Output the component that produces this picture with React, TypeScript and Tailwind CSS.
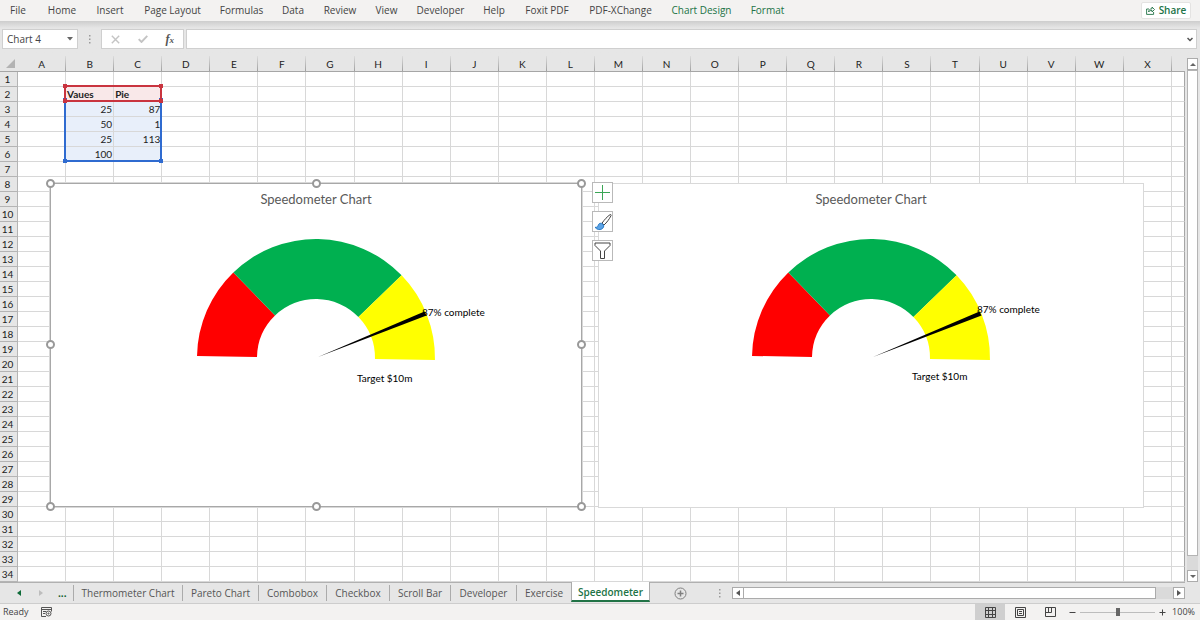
import { useState } from 'react'
import clsx from 'clsx'

interface RibbonTab {
  label: string
  width: string
  contextual?: boolean
}

interface SheetTab {
  label: string
  width: string
}

const ribbonTabs: RibbonTab[] = [
  { label: 'File', width: 'w-[34px]' },
  { label: 'Home', width: 'w-[54px]' },
  { label: 'Insert', width: 'w-[42px]' },
  { label: 'Page Layout', width: 'w-[83px]' },
  { label: 'Formulas', width: 'w-[55px]' },
  { label: 'Data', width: 'w-[48px]' },
  { label: 'Review', width: 'w-[46px]' },
  { label: 'View', width: 'w-[47px]' },
  { label: 'Developer', width: 'w-[61px]' },
  { label: 'Help', width: 'w-[46px]' },
  { label: 'Foxit PDF', width: 'w-[60px]' },
  { label: 'PDF-XChange', width: 'w-[87px]' },
  { label: 'Chart Design', width: 'w-[75px]', contextual: true },
  { label: 'Format', width: 'w-[57px]', contextual: true },
]

const sheetTabs: SheetTab[] = [
  { label: 'Thermometer Chart', width: 'w-[109px]' },
  { label: 'Pareto Chart', width: 'w-[76px]' },
  { label: 'Combobox', width: 'w-[68px]' },
  { label: 'Checkbox', width: 'w-[63px]' },
  { label: 'Scroll Bar', width: 'w-[61px]' },
  { label: 'Developer', width: 'w-[66px]' },
  { label: 'Exercise', width: 'w-[54px]' },
]

const columns = 'ABCDEFGHIJKLMNOPQRSTUVWX'.split('')
const rows = Array.from({ length: 34 }, (_, i) => i + 1)

const cells: Record<string, string> = {
  B2: 'Vaues',
  C2: 'Pie',
  B3: '25',
  C3: '87',
  B4: '50',
  C4: '1',
  B5: '25',
  C5: '113',
  B6: '100',
}

// Gauge geometry, angles in degrees counter-clockwise from the x axis
const CENTER = 120
const OUTER = 119
const INNER = 59

const segments = [
  { from: 179, to: 134, color: '#ff0000' },
  { from: 134, to: 44, color: '#00b050' },
  { from: 44, to: -1, color: '#ffff00' },
]

function polar(r: number, deg: number) {
  const a = (deg * Math.PI) / 180
  return `${(CENTER + r * Math.cos(a)).toFixed(2)} ${(CENTER - r * Math.sin(a)).toFixed(2)}`
}

function segmentPath(from: number, to: number) {
  return `M ${polar(OUTER, from)} A ${OUTER} ${OUTER} 0 0 1 ${polar(OUTER, to)} L ${polar(INNER, to)} A ${INNER} ${INNER} 0 0 0 ${polar(INNER, from)} Z`
}

function SpeedometerChart({ valueY, targetY }: { valueY: number; targetY: number }) {
  return (
    <div className="flex flex-col items-center pt-[6px] font-[Lato,sans-serif]">
      <h2 className="text-[13px] leading-[18px] text-[#595959]">Speedometer Chart</h2>
      <svg width="240" height="160" className="mt-[30px] overflow-visible">
        {segments.map((s) => (
          <path key={s.color} d={segmentPath(s.from, s.to)} fill={s.color} />
        ))}
        <path d="M 122 119 L 228.5 73.5 L 230.5 77.5 Z" fill="#000" />
        <text x="226" y={valueY} fontSize="10" fill="#000">87% complete</text>
        <text x="161" y={targetY} fontSize="10" fill="#000">Target $10m</text>
      </svg>
    </div>
  )
}

const handles = [
  '-left-[5px] -top-[5px]',
  'left-1/2 -ml-1 -top-[5px]',
  '-right-[5px] -top-[5px]',
  '-left-[5px] top-1/2 -mt-[5px]',
  '-right-[5px] top-1/2 -mt-[5px]',
  '-left-[5px] -bottom-[5px]',
  'left-1/2 -ml-1 -bottom-[5px]',
  '-right-[5px] -bottom-[5px]',
]

function RangeOutline({ className, dot }: { className: string; dot: string }) {
  return (
    <div className={clsx('pointer-events-none absolute border-2', className)}>
      {['-left-[3px] -top-[3px]', '-right-[3px] -top-[3px]', '-left-[3px] -bottom-[3px]', '-right-[3px] -bottom-[3px]'].map((p) => (
        <span key={p} className={clsx('absolute size-1', p, dot)} />
      ))}
    </div>
  )
}

function Ribbon() {
  return (
    <header className="flex h-[21px] items-center bg-[#f3f2f1] pb-px">
      <nav className="flex pl-px">
        {ribbonTabs.map((tab) => (
          <button
            key={tab.label}
            className={clsx('flex justify-center text-[10px] leading-[18px] whitespace-nowrap', tab.width, tab.contextual ? 'text-[#217346]' : 'text-[#444444]')}
          >
            {tab.label}
          </button>
        ))}
      </nav>
      <button className="mr-[9px] ml-auto flex h-[17px] w-[50px] items-center justify-center gap-1 rounded-[2px] border border-[#e4e3e2] bg-white text-[10px] font-semibold text-[#217346]">
        <svg width="9" height="9" viewBox="0 0 9 9" fill="none" stroke="currentColor" strokeWidth="0.9">
          <path d="M3 3H.6v5.4h7V6" />
          <path d="M2.5 6C2.8 3.8 4 2.8 6 2.8V1l2.500 2.500L6 6V4.400C4.500 4.400 3.300 4.900 2.500 6z" />
        </svg>
        Share
      </button>
    </header>
  )
}

function FormulaBar() {
  return (
    <div className="flex h-[35px] items-start bg-linear-to-b from-[#cdcdcd] via-[#e6e6e6] via-20% to-[#e6e6e6] pt-2 pr-[3px] pl-[2px]">
      <div className="flex h-5 w-[76px] items-center border border-[#cfcfcf] bg-white">
        <input aria-label="Name Box" defaultValue="Chart 4" className="w-[60px] bg-transparent pl-1 text-[10px] text-[#444] outline-none" />
        <button aria-label="Open name list" className="flex flex-1 justify-center">
          <svg width="6" height="4" viewBox="0 0 6 4"><path d="M0 0h6L3 3.500z" fill="#666" /></svg>
        </button>
      </div>
      <div className="flex h-5 w-[23px] items-center justify-center">
        <svg width="2" height="9" fill="#9a9a9a"><path d="M0 0h1.500v1.500H0zM0 3.500h1.500v1.500H0zM0 7h1.500v1.500H0z" /></svg>
      </div>
      <div className="flex h-5 w-[83px] items-center justify-around border border-[#cfcfcf] bg-white">
        <button aria-label="Cancel">
          <svg width="9" height="9" viewBox="0 0 9 9" stroke="#c4c4c4" strokeWidth="1.400"><path d="M.8.8l7.400 7.400M8.200.8L.8 8.200" /></svg>
        </button>
        <button aria-label="Enter">
          <svg width="10" height="8" viewBox="0 0 10 8" fill="none" stroke="#c4c4c4" strokeWidth="1.900"><path d="M.7 4.200L3.500 7 9.300.8" /></svg>
        </button>
        <button aria-label="Insert Function" className="flex items-baseline font-['Liberation_Serif',serif] font-bold text-[#555] italic">
          <span className="text-[12px] leading-4">f</span>
          <span className="text-[9px] leading-4">x</span>
        </button>
      </div>
      <div className="ml-[2px] flex h-5 flex-1 items-center border border-[#cfcfcf] bg-white">
        <input aria-label="Formula Bar" className="h-full flex-1 bg-transparent px-1 text-[10px] outline-none" />
        <button aria-label="Expand Formula Bar" className="mr-[3px]">
          <svg width="6" height="5" viewBox="0 0 6 5" fill="none" stroke="#555" strokeWidth="1.500"><path d="M.5 1L3 3.500 5.500 1" /></svg>
        </button>
      </div>
    </div>
  )
}

function Grid() {
  return (
    <table className="w-full table-fixed border-separate border-spacing-0 bg-white font-[Lato,sans-serif] text-[10px] leading-[14px] text-[#222]">
      <thead>
        <tr className="h-4 bg-[#e6e6e6]">
          <th className="w-[18px] border-b border-[#a6a6a6] p-0">
            <svg width="10" height="9" className="ml-[6px]"><path d="M9 0v9H0z" fill="#b3b3b3" /></svg>
          </th>
          {columns.map((c) => (
            <th
              key={c}
              scope="col"
              className="border-b border-[#a6a6a6] bg-[linear-gradient(#dcdcdc,#a0a0a0)] bg-[length:1px_100%] bg-right bg-no-repeat p-0 pr-px font-normal"
            >
              {c}
            </th>
          ))}
          <th className="w-[13px] border-b border-[#a6a6a6] p-0" />
        </tr>
      </thead>
      <tbody>
        {rows.map((r) => (
          <tr key={r} className="h-[15px]">
            <th scope="row" className="border-r border-b border-[#b4b4b4] bg-[#e6e6e6] p-0 pr-[2px] text-center font-normal">
              {r}
            </th>
            {columns.map((c) => {
              const inRange = (c === 'B' || c === 'C') && r >= 2 && r <= 6
              return (
                <td
                  key={c}
                  className={clsx(
                    'border-r border-b border-[#d8d8d8] px-px py-0 whitespace-nowrap',
                    inRange && (r === 2 ? 'bg-[#f9e8e9] text-left font-bold' : 'border-[#c9d0da] bg-[#e8effa] text-right'),
                  )}
                >
                  {cells[c + r]}
                </td>
              )
            })}
            <td className="border-r border-b border-r-[#a6a6a6] border-b-[#d8d8d8] p-0" />
          </tr>
        ))}
      </tbody>
    </table>
  )
}

function ChartButtons() {
  const button = 'flex size-[21px] items-center justify-center border border-[#b9b9b9] bg-white'
  return (
    <div className="absolute top-[126px] left-[592px] flex flex-col gap-2">
      <button aria-label="Chart Elements" className={button}>
        <svg width="17" height="17" stroke="#3aa655" strokeWidth="1"><path d="M8.500 1v15M1 8.500h15" /></svg>
      </button>
      <button aria-label="Chart Styles" className={button}>
        <svg width="18" height="18" viewBox="0 0 18 18" fill="none">
          <path d="M8 10.200C10.500 6.500 13.300 3.600 16 1.700c.9-.5 1.400.2 1 1C15.200 6.300 12.800 9.500 10 12z" fill="#fff" stroke="#444" strokeWidth="1" />
          <path d="M7.300 10.200c-2 0-3 1-3.300 2.600-.3 1.200-1.300 1.700-3 1.500 1.800 2.300 4.700 2.900 6.800 1.700 1.700-1 2.300-2.700 1.700-4.200z" fill="#5ba3e6" stroke="#1f72c0" strokeWidth=".9" />
        </svg>
      </button>
      <button aria-label="Chart Filters" className={button}>
        <svg width="17" height="17" fill="#fff" stroke="#444" strokeWidth="1"><path d="M1 1h15v2.500L10.500 9v7.500h-4V9L1 3.500z" /></svg>
      </button>
    </div>
  )
}

function VerticalScroll() {
  const button = 'flex h-3 items-center justify-center border border-[#ababab] bg-white'
  return (
    <div className="mt-[2px] mr-[2px] ml-[2px] flex w-[11px] flex-col bg-[#dadada]">
      <button aria-label="Scroll up" className={button}>
        <svg width="6" height="3"><path d="M0 3h6L3 0z" fill="#666" /></svg>
      </button>
      <div className="h-[486px] border border-[#b4b4b4] bg-white" />
      <button aria-label="Scroll down" className={clsx(button, 'mt-auto')}>
        <svg width="6" height="3"><path d="M0 0h6L3 3z" fill="#666" /></svg>
      </button>
    </div>
  )
}

function SheetTabs() {
  const [active, setActive] = useState('Speedometer')
  return (
    <div className="flex h-[22px] border-b border-[#cdcdcd] bg-[#e6e6e6] text-[10px] leading-[18px] text-[#555]">
      <div className="flex flex-1 border-t border-[#b0b0b0]">
        <div className="flex h-5 w-[73px] items-center text-[#0e5c2f]">
          <button aria-label="Previous sheet" className="ml-[17px]">
            <svg width="4" height="6"><path d="M4 0v6L0 3z" fill="#0e6b38" /></svg>
          </button>
          <button aria-label="Next sheet" className="ml-[18px]">
            <svg width="4" height="6"><path d="M0 0v6l4-3z" fill="#bdbdbd" /></svg>
          </button>
          <button aria-label="More sheets" className="ml-[15px] font-bold">...</button>
        </div>
        <span className="mt-[2px] h-4 w-px bg-[#ababab]" />
        {sheetTabs.map((tab) => (
          <button
            key={tab.label}
            onClick={() => setActive(tab.label)}
            className={clsx('flex h-[19px] items-center justify-center whitespace-nowrap', tab.width)}
          >
            <span className="flex-1">{tab.label}</span>
            {tab.label !== 'Exercise' && <span className="h-4 w-px bg-[#ababab]" />}
          </button>
        ))}
        <button
          onClick={() => setActive('Speedometer')}
          className={clsx(
            '-mt-px h-5 w-[79px] border-x border-b-2 border-x-[#ababab] border-b-[#217346] bg-white pt-[2px] leading-4 text-[#217346]',
            active === 'Speedometer' && 'font-semibold',
          )}
        >
          Speedometer
        </button>
        <button aria-label="New sheet" className="ml-6">
          <svg width="13" height="13" fill="none" stroke="#808080"><circle cx="6.500" cy="6.500" r="5.500" /><path d="M6.500 3.500v6M3.500 6.500h6" strokeWidth="1.500" /></svg>
        </button>
        <div className="ml-auto flex w-[466px] items-center">
          <svg width="2" height="9" fill="#9a9a9a"><path d="M0 0h1.500v1.500H0zM0 3.500h1.500v1.500H0zM0 7h1.500v1.500H0z" /></svg>
          <div className="ml-[11px] flex h-3 flex-1 bg-[#dadada]">
            <button aria-label="Scroll left" className="flex w-3 items-center justify-center border border-[#ababab] bg-white">
              <svg width="4" height="6"><path d="M4 0v6L0 3z" fill="#555" /></svg>
            </button>
            <div className="w-[412px] border border-l-0 border-[#ababab] bg-white" />
            <button aria-label="Scroll right" className="ml-auto flex w-3 items-center justify-center border border-[#ababab] bg-white">
              <svg width="4" height="6"><path d="M0 0v6l4-3z" fill="#555" /></svg>
            </button>
          </div>
        </div>
      </div>
      <div className="w-[15px]" />
    </div>
  )
}

function StatusBar() {
  const [zoom, setZoom] = useState(100)
  const view = 'flex h-4 w-[30px] items-center justify-center'
  return (
    <footer className="flex h-4 items-center bg-[#f3f2f1] pr-[5px] pl-[3px] text-[9px] text-[#444]">
      <span>Ready</span>
      <button aria-label="Record macro" className="ml-3">
        <svg width="11" height="10" fill="none" stroke="#555"><path d="M5 9.500H.5v-9h10v4M.5 2.500h10M2 4.500h3M2 6.500h2" /><circle cx="7.500" cy="6.500" r="2.500" /><circle cx="7.500" cy="6.500" r=".6" /></svg>
      </button>
      <div className="ml-auto flex">
        <button aria-label="Normal view" className={clsx(view, 'bg-[#cfcfcf]')}>
          <svg width="11" height="11" fill="none" stroke="#444"><path d="M.5.5h10v10H.5zM3.500.5v10M7.500.5v10M.5 3.500h10M.5 7.500h10" /></svg>
        </button>
        <button aria-label="Page layout view" className={view}>
          <svg width="11" height="11" fill="none" stroke="#444"><path d="M.5.5h10v10H.5zM2.500 2.500h6v6h-6zM4 4.500h3M4 6.500h3" /></svg>
        </button>
        <button aria-label="Page break preview" className={view}>
          <svg width="11" height="11" fill="none" stroke="#444"><path d="M.5.5h10v9H.5zM3.500.5v5M6.500.5v5M.5 5.500h6" /></svg>
        </button>
      </div>
      <button aria-label="Zoom out" className="ml-1">
        <svg width="7" height="7" stroke="#444"><path d="M.5 3.500h6" /></svg>
      </button>
      <input
        type="range"
        aria-label="Zoom"
        min={0}
        max={200}
        value={zoom}
        onChange={(e) => setZoom(Number(e.target.value))}
        className="mx-1 h-px w-[75px] appearance-none bg-[#bdbdbd] [&::-webkit-slider-thumb]:h-2 [&::-webkit-slider-thumb]:w-1 [&::-webkit-slider-thumb]:appearance-none [&::-webkit-slider-thumb]:bg-[#666]"
      />
      <button aria-label="Zoom in">
        <svg width="7" height="7" stroke="#444"><path d="M.5 3.500h6M3.500.5v6" /></svg>
      </button>
      <span className="w-[29px] text-right">{zoom}%</span>
    </footer>
  )
}

export default function App() {
  return (
    <div className="flex min-h-screen flex-col bg-[#e6e6e6] font-['Open_Sans','Noto_Sans',sans-serif]">
      <Ribbon />
      <FormulaBar />
      <main className="flex">
        <div className="relative flex-1">
          <Grid />

          {/* Source ranges of the selected chart */}
          <RangeOutline className="top-[45px] left-[64px] h-[61px] w-[98px] border-t-0 border-[#2f6bd0]" dot="bg-[#2f6bd0]" />
          <RangeOutline className="top-[29px] left-[64px] h-[17px] w-[98px] border-[#c9343f]" dot="bg-[#c9343f]" />

          {/* Second chart */}
          <section className="absolute top-[127px] left-[598px] h-[325px] w-[546px] border border-[#d9d9d9] bg-white">
            <SpeedometerChart valueY={75} targetY={142} />
          </section>

          {/* Selected chart */}
          <section className="absolute top-[127px] left-[50px] h-[324px] w-[532px] border border-[#a8a8a8] bg-white shadow-[0_0_0_1px_#d8d8d8]">
            <SpeedometerChart valueY={78} targetY={144} />
            {handles.map((h) => (
              <span key={h} className={clsx('absolute size-[9px] rounded-full border-2 border-[#999] bg-white', h)} />
            ))}
          </section>
          <ChartButtons />
        </div>
        <VerticalScroll />
      </main>
      <SheetTabs />
      <StatusBar />
    </div>
  )
}
